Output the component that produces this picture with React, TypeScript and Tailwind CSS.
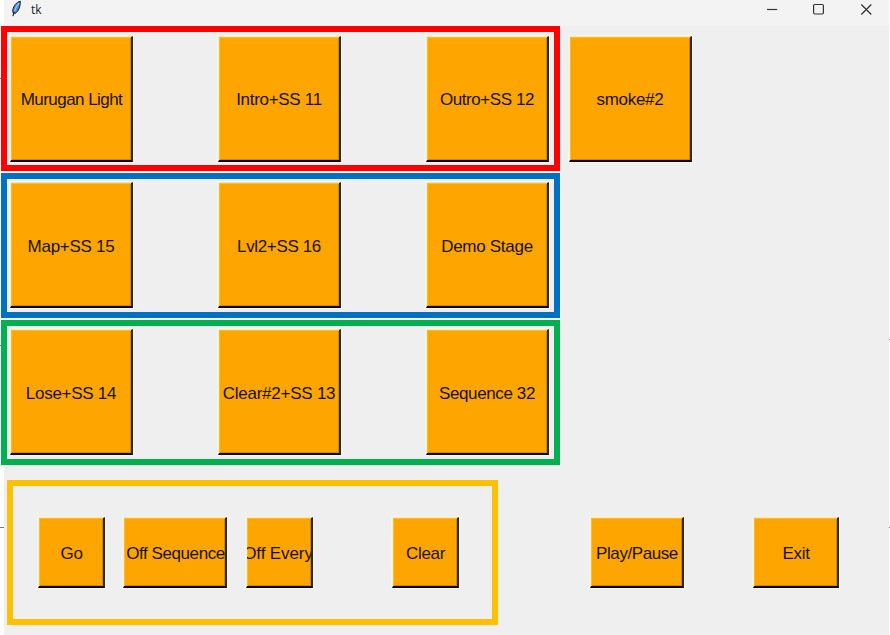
import React from "react";

type PadProps = { label: string; size?: string; text?: string };

// Raised Tk push button with light top/left and dark bottom/right edges.
function Pad({ label, size = "w-[123px] h-[126px]", text = "pt-[2px] tracking-[-0.3px]" }: PadProps) {
  return (
    <button
      className={`flex shrink-0 items-center justify-center overflow-hidden whitespace-nowrap border border-t-[#ffe9a8] border-l-[#fff3c8] border-r-[#2b2a2a] border-b-[#0c0808] border-r-2 border-b-2 bg-[#ffa500] p-0 text-[17px] leading-none text-[#1a1208] shadow-[inset_1px_1px_0_#ffb92a,inset_-1px_-1px_0_#d08800,0_0_0_1px_#f4f4f4] ${size}`}
    >
      <span className={`shrink-0 ${text}`}>{label}</span>
    </button>
  );
}

const groups = [
  {
    border: "border-[#ff0000]",
    pad: "pt-[4px]",
    items: [
      { label: "Murugan Light", text: "pt-[2px] pl-px tracking-[-0.55px]" },
      { label: "Intro+SS 11", text: "pt-[2px] tracking-[-0.3px]" },
      { label: "Outro+SS 12", text: "pt-[2px] tracking-[-0.42px]" },
    ],
  },
  {
    border: "border-[#0070c0]",
    pad: "pt-[3px]",
    items: [
      { label: "Map+SS 15", text: "pt-[4px] tracking-[-0.28px]" },
      { label: "Lvl2+SS 16", text: "pt-[4px] tracking-[-0.35px]" },
      { label: "Demo Stage", text: "pt-[4px] tracking-[-0.28px]" },
    ],
  },
  {
    border: "border-[#00b050]",
    pad: "pt-[3px]",
    items: [
      { label: "Lose+SS 14", text: "pt-[4px] tracking-[-0.28px]" },
      { label: "Clear#2+SS 13", text: "pt-[4px] tracking-[-0.24px]" },
      { label: "Sequence 32", text: "pt-[4px] tracking-[-0.38px]" },
    ],
  },
];

function Feather() {
  return (
    <svg width="12" height="18" viewBox="0 0 12 18" className="shrink-0">
      <path d="M10.3 1.2 C6.5 2 3.6 6 2.8 9.6 L2.9 12.6 L5.2 13.4 C8.4 11.5 10.4 7 10.3 1.2Z" fill="#4a88d4" stroke="#151d2b" strokeWidth="1" />
      <path d="M9 3.2 C6.6 6 5 9 4.1 12.4" fill="none" stroke="#9cc6f2" strokeWidth="1.3" />
      <path d="M4.3 11.5 L2.9 16.2" stroke="#222" strokeWidth="1.2" />
    </svg>
  );
}

function Dash({ className }: { className: string }) {
  return <i className={`block h-px w-full bg-[#777] ${className}`} />;
}

export default function App() {
  return (
    <div className="flex h-[635px] w-[890px] overflow-hidden bg-white font-['Liberation_Sans',Arial,sans-serif]">
      <div className="w-[4px] shrink-0">
        <Dash className="mt-[78px]" />
        <Dash className="mt-[266px]" />
        <Dash className="mt-[181px]" />
      </div>
      <main className="flex h-[635px] w-[885px] shrink-0 flex-col bg-[#efefef]">
        <header className="flex h-[26px] shrink-0 items-start bg-[#f3f3f3] pl-[6px]">
          <Feather />
          <span className="ml-[9px] mt-[2px] font-['Open_Sans',sans-serif] text-[12px] font-medium leading-[16px] text-[#222]">tk</span>
          <svg width="106" height="20" viewBox="0 0 106 20" className="ml-auto mr-[16px]" fill="none" stroke="#333" strokeWidth="1.2">
            <path d="M0 9.5H10.2" />
            <rect x="46.6" y="4.5" width="9.8" height="9.5" rx="1.2" />
            <path d="M94.3 4.5L104.3 14.5M104.3 4.5L94.3 14.5" />
          </svg>
        </header>

        <section className="-ml-[3px] flex shrink-0">
          <div className="flex w-[559px] flex-col gap-[2px] bg-[#f8f8f8]">
            {groups.map((g) => (
              <div key={g.border} className={`flex h-[145px] items-start justify-between border-[6px] bg-[#efefef] pr-[5px] pl-[3px] ${g.border} ${g.pad}`}>
                {g.items.map((item) => <Pad key={item.label} label={item.label} text={item.text} />)}
              </div>
            ))}
          </div>
          <div className="pt-[10px] pl-[9px]">
            <Pad label="smoke#2" />
          </div>
        </section>

        <section className="mt-[15px] flex items-start pl-[3px]">
          <div className="flex h-[145px] w-[491px] shrink-0 border-[6px] border-[#ffc000] pt-[31px] pl-[25px]">
            <Pad label="Go" size="w-[67px] h-[71px]" text="pt-[2px] pl-px tracking-[-0.3px]" />
            <div className="ml-[18px] flex gap-[19px]">
              <Pad label="Off Sequence" size="w-[104px] h-[71px]" text="pt-[2px] pl-[2px] tracking-[-0.42px]" />
              {/* The label is wider than its button, so its first letter is cut at the left edge. */}
              <Pad label="Off Every" size="w-[67px] h-[71px]" text="pt-[2px] pr-[2px] tracking-[-0.1px]" />
            </div>
            <div className="ml-[79px]">
              <Pad label="Clear" size="w-[67px] h-[71px]" text="pt-[2px] pl-px tracking-[-0.3px]" />
            </div>
          </div>
          <div className="mt-[37px] ml-[92px] flex gap-[69px]">
            <Pad label="Play/Pause" size="w-[94px] h-[71px]" text="pt-[2px] pl-px tracking-[-0.42px]" />
            <Pad label="Exit" size="w-[86px] h-[71px]" text="pt-[2px] pl-px tracking-[-0.3px]" />
          </div>
        </section>
      </main>
      <div className="w-px shrink-0">
        <Dash className="mt-[339px]" />
        <Dash className="mt-[187px]" />
      </div>
    </div>
  );
}
